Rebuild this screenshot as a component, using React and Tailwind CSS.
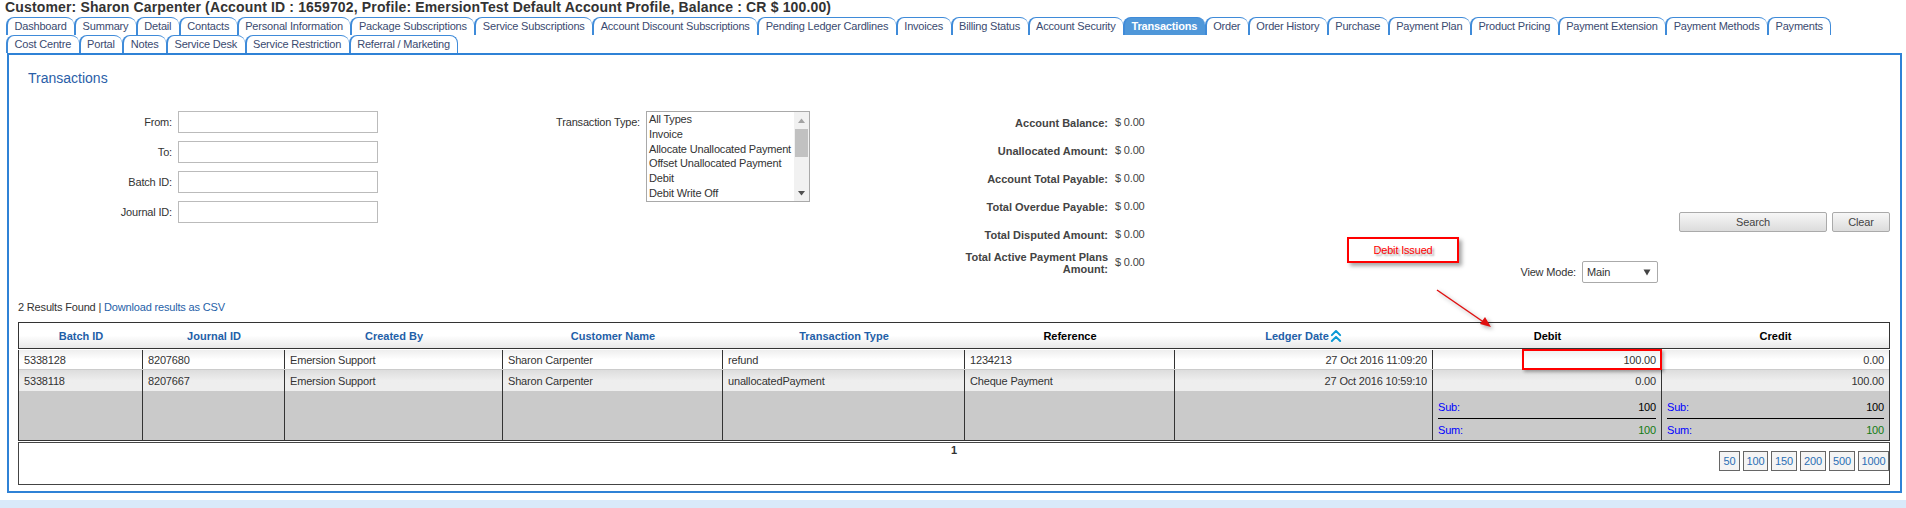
import React from "react";
import { ChevronsUp } from "lucide-react";

const row1 = ["Dashboard","Summary","Detail","Contacts","Personal Information","Package Subscriptions","Service Subscriptions","Account Discount Subscriptions","Pending Ledger Cardlines","Invoices","Billing Status","Account Security","Transactions","Order","Order History","Purchase","Payment Plan","Product Pricing","Payment Extension","Payment Methods","Payments"];
const row2 = ["Cost Centre","Portal","Notes","Service Desk","Service Restriction","Referral / Marketing"];

const cols = "grid grid-cols-[124px_142px_218px_220px_242px_210px_258px_229px_227px]";

function Tab({ label, last }) {
  const active = label === "Transactions";
  return (
    <div className={"h-[18px] pl-[6.5px] pr-[7.5px] rounded-t-[8px] border-t border-l-2 border-[#3f8bd9] leading-[17px] tracking-[-0.19px] whitespace-nowrap " + (active ? "bg-[#4f97d9] text-white font-bold" : "bg-white text-[#3a4a70]") + (last ? " border-r" : "")}>
      {label}
    </div>
  );
}

function Field({ label }) {
  return (
    <div className="flex items-center h-[22px] mb-[8px]">
      <div className="w-[163px] pt-[1px] text-right text-[#333]">{label}</div>
      <div className="ml-[6px] w-[200px] h-[22px] border border-[#bbb] bg-white" />
    </div>
  );
}

function Stat({ label }) {
  return (
    <div className="flex items-center h-[28px] pt-[1px]">
      <div className="w-[200px] text-right font-bold tracking-normal text-[#444] leading-[12px]">{label}</div>
      <div className="ml-[7px] text-[#444]">$ 0.00</div>
    </div>
  );
}

function HeadCell({ children, black }) {
  return (
    <div className={"flex items-center justify-center pt-[1px] font-bold tracking-normal " + (black ? "text-black" : "text-[#1f5fa8]")}>
      {children}
    </div>
  );
}

function Row({ cells, className }) {
  return (
    <div className={cols + " " + className}>
      {cells.map((c, i) => (
        <div key={i} className={"flex items-center px-[5px] pt-[1px] text-[#333] whitespace-nowrap " + (i < 8 ? "border-r border-[#333] " : "") + (i >= 6 ? "justify-end" : "")}>
          {c}
        </div>
      ))}
    </div>
  );
}

function Totals() {
  return (
    <div className="flex flex-col px-[5px] pt-[9px]">
      <div className="flex justify-between h-[14px] pt-[1px] items-center">
        <span className="text-[#0000ff]">Sub:</span>
        <span className="text-black">100</span>
      </div>
      <div className="mt-[4px] border-t border-black" />
      <div className="flex justify-between h-[14px] pt-[1px] items-center mt-[4px]">
        <span className="text-[#0000ff]">Sum:</span>
        <span className="text-[#137a13]">100</span>
      </div>
    </div>
  );
}

export default function App() {
  return (
    <div className="relative h-[508px] w-[1906px] overflow-hidden bg-white text-[11px] tracking-[-0.17px] font-['Liberation_Sans',Arial,sans-serif]">
      <div className="h-[17px] pl-[5px] text-[14px] leading-[15px] font-bold text-[#333] tracking-[0.15px] whitespace-nowrap">
        Customer: Sharon Carpenter (Account ID : 1659702, Profile: EmersionTest Default Account Profile, Balance : CR $ 100.00)
      </div>

      <div className="pl-[6px]">
        <div className="flex h-[18px]">
          {row1.map((t, i) => <Tab key={t} label={t} last={i === row1.length - 1} />)}
        </div>
        <div className="flex h-[18px]">
          {row2.map((t, i) => <Tab key={t} label={t} last={i === row2.length - 1} />)}
        </div>
      </div>

      <div className="ml-[7px] w-[1895px] h-[440px] border-2 border-[#2f82d6] bg-white">
        <div className="pl-[19px] pt-[14px] h-[53px] text-[14px] leading-[18px] tracking-normal text-[#2a5ea8]">Transactions</div>

        <div className="flex h-[190px]">
          <div className="w-[369px] pt-[3px]">
            <Field label="From:" />
            <Field label="To:" />
            <Field label="Batch ID:" />
            <Field label="Journal ID:" />
          </div>

          <div className="ml-[177px] flex items-start pt-[3px]">
            <div className="w-[85px] h-[22px] pt-[1px] flex items-center justify-end text-[#333] whitespace-nowrap">Transaction Type:</div>
            <div className="ml-[6px] flex w-[164px] h-[91px] border border-[#a9a9a9] bg-white">
              <div className="flex-1 pl-[2px] text-[#333] leading-[14.8px] whitespace-nowrap">
                <div>All Types</div>
                <div>Invoice</div>
                <div>Allocate Unallocated Payment</div>
                <div>Offset Unallocated Payment</div>
                <div>Debit</div>
                <div>Debit Write Off</div>
              </div>
              <div className="w-[15px] bg-[#f1f1f1] flex flex-col items-center">
                <svg width="9" height="17" viewBox="0 0 9 17" className="shrink-0"><path d="M1 11 L4.5 6.5 L8 11 Z" fill="#a3a3a3" /></svg>
                <div className="w-[13px] h-[28px] bg-[#c1c1c1]" />
                <div className="flex-1" />
                <svg width="9" height="15" viewBox="0 0 9 15" className="shrink-0"><path d="M1 5 L8 5 L4.5 9.5 Z" fill="#505050" /></svg>
              </div>
            </div>
          </div>

          <div className="ml-[98px] w-[238px]">
            <Stat label="Account Balance:" />
            <Stat label="Unallocated Amount:" />
            <Stat label="Account Total Payable:" />
            <Stat label="Total Overdue Payable:" />
            <Stat label="Total Disputed Amount:" />
            <Stat label={<>Total Active Payment Plans<br />Amount:</>} />
          </div>

          <div className="flex-1 flex flex-col items-end">
            <div className="mt-[104px] mr-[10px] flex gap-[5px]">
              <button className="w-[148px] h-[20px] pt-[1px] rounded-[2px] border border-[#aaa] bg-gradient-to-b from-[#f7f7f7] to-[#dcdcdc] text-[#444]">Search</button>
              <button className="w-[58px] h-[20px] pt-[1px] rounded-[2px] border border-[#aaa] bg-gradient-to-b from-[#f7f7f7] to-[#dcdcdc] text-[#444]">Clear</button>
            </div>
            <div className="mt-[29px] mr-[242px] flex items-center gap-[6px]">
              <span className="text-[#333]">View Mode:</span>
              <div className="w-[76px] h-[22px] border border-[#aaa] rounded-[2px] flex items-center justify-between pl-[4px] pr-[6px] text-[#333]">
                <span>Main</span>
                <svg width="8" height="7" viewBox="0 0 8 7"><path d="M0.5 0.5 H7.5 L4 6.5 Z" fill="#444" /></svg>
              </div>
            </div>
          </div>
        </div>

        <div className="ml-[9px] h-[16px] pt-[1px] leading-[16px] text-[#333]">
          2 Results Found | <span className="text-[#1f5fa8]">Download results as CSV</span>
        </div>

        <div className="ml-[9px] mt-[8px] w-[1872px]">
          <div className={cols + " h-[27px] border border-[#333] bg-gradient-to-b from-white from-50% to-[#e8e8e8]"}>
            <HeadCell>Batch ID</HeadCell>
            <HeadCell>Journal ID</HeadCell>
            <HeadCell>Created By</HeadCell>
            <HeadCell>Customer Name</HeadCell>
            <HeadCell>Transaction Type</HeadCell>
            <HeadCell black>Reference</HeadCell>
            <HeadCell>
              Ledger Date
              <ChevronsUp size={20} strokeWidth={2.4} className="-mx-[3px] text-[#0a9ad6]" />
            </HeadCell>
            <HeadCell black>Debit</HeadCell>
            <HeadCell black>Credit</HeadCell>
          </div>

          <div className="mt-[1px] border-x border-b border-[#333]">
            <Row className="h-[20px] bg-gradient-to-b from-[#eeeeee] from-0% to-white to-50% border-b border-[#ccc]" cells={["5338128","8207680","Emersion Support","Sharon Carpenter","refund","1234213","27 Oct 2016 11:09:20","100.00","0.00"]} />
            <Row className="h-[21px] bg-gradient-to-b from-[#dddddd] to-[#eeeeee] to-50%" cells={["5338118","8207667","Emersion Support","Sharon Carpenter","unallocatedPayment","Cheque Payment","27 Oct 2016 10:59:10","0.00","100.00"]} />
            <div className={cols + " h-[49px] bg-[#cacaca]"}>
              <div className="border-r border-[#333]" />
              <div className="border-r border-[#333]" />
              <div className="border-r border-[#333]" />
              <div className="border-r border-[#333]" />
              <div className="border-r border-[#333]" />
              <div className="border-r border-[#333]" />
              <div className="border-r border-[#333]" />
              <div className="border-r border-[#333]"><Totals /></div>
              <div><Totals /></div>
            </div>
          </div>

          <div className="mt-[1px] h-[43px] border border-[#444] grid grid-cols-[1fr_auto_1fr]">
            <div />
            <div className="font-bold text-[#333] leading-[14px]">1</div>
            <div className="mt-[8px] flex justify-end gap-[3px] h-[20px]">
              {[["50","w-[21px]"],["100","w-[25px]"],["150","w-[26px]"],["200","w-[26px]"],["500","w-[26px]"],["1000","w-[31px]"]].map(([n, w]) => (
                <div key={n} className={w + " h-[20px] border border-[#666] bg-[#f4f4f4] text-[#2a6fb5] flex items-center justify-center"}>{n}</div>
              ))}
            </div>
          </div>
        </div>
      </div>

      <div className="mt-[7px] h-[8px] bg-[#d9eafa]" />

      <div className="absolute left-[1347px] top-[237px] w-[112px] h-[26px] border-2 border-[#ff0000] bg-white shadow-[3px_3px_4px_rgba(0,0,0,0.35)] flex items-center justify-center text-[#ff0000] [text-shadow:2px_2px_2px_rgba(0,0,0,0.35)]">
        Debit Issued
      </div>
      <svg className="absolute left-[1430px] top-[285px] drop-shadow-[2px_2px_2px_rgba(0,0,0,0.35)]" width="70" height="50" viewBox="0 0 70 50">
        <path d="M7 5 L55 38" stroke="#e01010" strokeWidth="1.5" fill="none" />
        <path d="M61 42 L50 39 L55 32 Z" fill="#e01010" />
      </svg>
      <div className="absolute left-[1522px] top-[349px] w-[140px] h-[21px] border-2 border-[#ff0000] shadow-[2px_2px_3px_rgba(0,0,0,0.3)]" />
    </div>
  );
}
